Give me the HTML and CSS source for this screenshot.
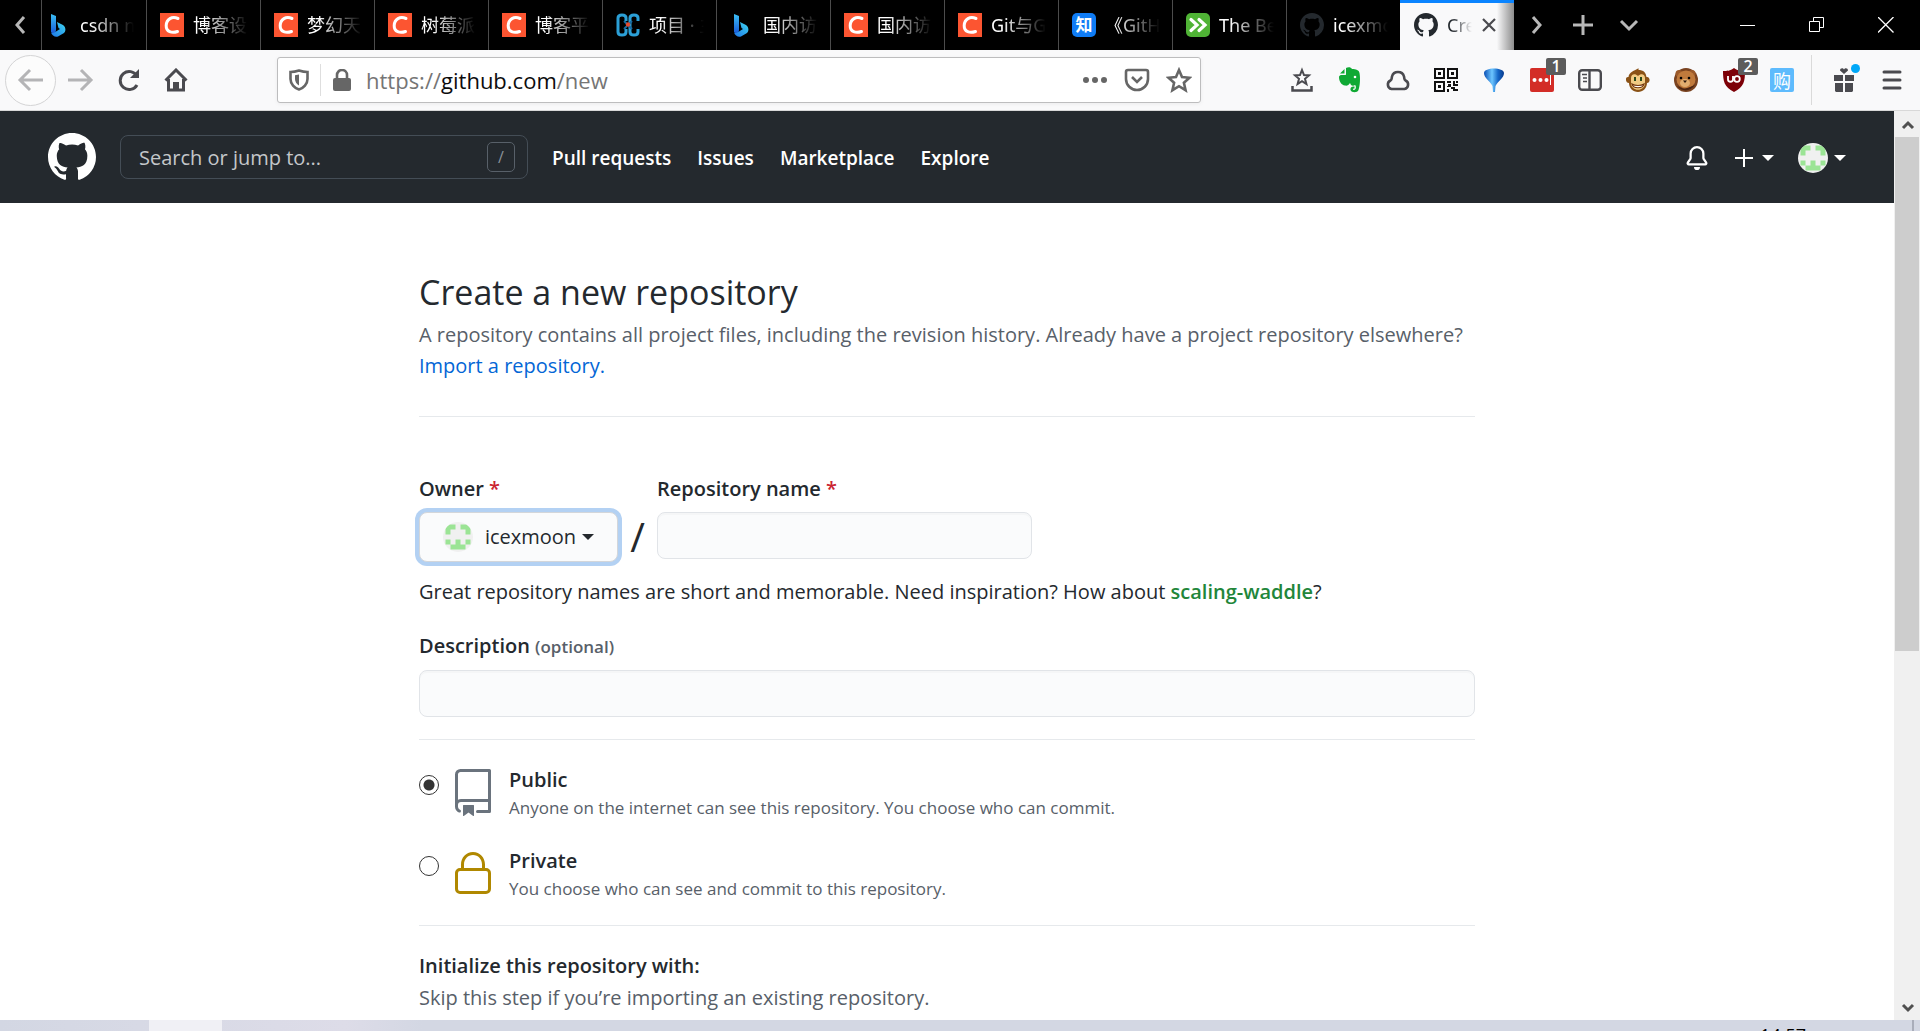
FILE: index.html
```html
<!DOCTYPE html>
<html lang="en">
<head>
<meta charset="utf-8">
<title>Create a New Repository</title>
<link rel="stylesheet" href="styles.css">
</head>
<body>
<svg class="defs" aria-hidden="true">
  <defs>
    <linearGradient id="bing-a" x1="0" y1="0" x2="0" y2="1"><stop offset="0" stop-color="#3bc0f5"/><stop offset="1" stop-color="#1551d6"/></linearGradient>
    <linearGradient id="bing-b" x1="0" y1="1" x2="1" y2="0"><stop offset="0" stop-color="#1d74e8"/><stop offset="1" stop-color="#3fd8f0"/></linearGradient>
    <linearGradient id="pin" x1="0" y1="0" x2="1" y2="0"><stop offset="0" stop-color="#0a4fb4"/><stop offset=".4" stop-color="#6cc6ff"/><stop offset=".7" stop-color="#1668c8"/><stop offset="1" stop-color="#083a8c"/></linearGradient>
  </defs>
  <symbol id="bing" viewBox="0 0 24 24"><path fill="url(#bing-a)" d="M4 1l5 2v14l-1 5-4-3z"/><path fill="url(#bing-b)" d="M10 9l6 3c3 2 3 6 1 8l-6 3.500c-3 1-6-1-7-4 2 1 4 0 5-1l4-2.500-1.500-1z"/></symbol>
  <symbol id="csdn" viewBox="0 0 24 24"><path fill="#fc5531" d="M0 0h24v24H0z"/><path fill="none" stroke="#fff" stroke-width="3" stroke-linecap="round" d="M18 5.500C12 3 6.500 6 6.200 12.500 6 19 12 20.500 17.500 18.500"/></symbol>
  <symbol id="links" viewBox="0 0 24 24"><path fill="none" stroke="#2b9fd6" stroke-width="3" d="M10 8V5c0-4-8-4-8 0v14c0 4 8 4 8 0v-3M22 8V5c0-4-8-4-8 0v14c0 4 8 4 8 0v-3"/><path stroke="#176ba2" stroke-width="2" d="M8 8l3 3m5 5l-3-3m3-5l-3 3m-5 5l3-3"/><circle cx="12" cy="11.500" r="2.200" fill="#e2492f"/></symbol>
  <symbol id="octocat" viewBox="0 0 16 16"><path fill="currentColor" fill-rule="evenodd" d="M8 0C3.580 0 0 3.580 0 8c0 3.540 2.290 6.530 5.470 7.590.4.070.55-.17.55-.38 0-.19-.01-.82-.01-1.490-2.010.37-2.530-.49-2.690-.94-.09-.23-.48-.94-.82-1.130-.28-.15-.68-.52-.01-.53.63-.01 1.080.58 1.230.82.72 1.210 1.870.87 2.330.66.07-.52.28-.87.51-1.070-1.780-.2-3.640-.89-3.640-3.950 0-.87.31-1.590.82-2.150-.08-.2-.36-1.020.08-2.120 0 0 .67-.21 2.200.82.64-.18 1.320-.27 2-.27.68 0 1.360.09 2 .27 1.530-1.040 2.200-.82 2.200-.82.44 1.100.16 1.920.08 2.120.51.56.82 1.270.82 2.150 0 3.070-1.870 3.750-3.650 3.950.29.25.54.73.54 1.480 0 1.070-.01 1.930-.01 2.200 0 .21.15.46.55.38A8.013 8.013 0 0016 8c0-4.420-3.580-8-8-8z"/></symbol>
  <symbol id="identicon" viewBox="0 0 12 12"><path fill="#f0f0f0" d="M0 0h12v12H0z"/><path fill="#9be495" d="M1 1h4v2H3v2H1zM7 1h4v4H9V3H7zM1 7h2v2H1zM5 7h2v2h2v2H3V9h2zM9 7h2v2H9z"/></symbol>
</svg>

<header class="chrome">
  <nav class="tabstrip" aria-label="Tabs">
    <button class="scroll-left" aria-label="Scroll tabs left"><svg width="24" height="24" viewBox="0 0 24 24"><path class="line" d="M15 4l-7 8 7 8"/></svg></button>
    <button class="tab tab-first"><svg class="fav"><use href="#bing"/></svg><span>csdn n</span></button>
    <button class="tab"><svg class="fav"><use href="#csdn"/></svg><span>博客设</span></button>
    <button class="tab"><svg class="fav"><use href="#csdn"/></svg><span>梦幻天</span></button>
    <button class="tab"><svg class="fav"><use href="#csdn"/></svg><span>树莓派</span></button>
    <button class="tab"><svg class="fav"><use href="#csdn"/></svg><span>博客平</span></button>
    <button class="tab"><svg class="fav"><use href="#links"/></svg><span>项目 · 主</span></button>
    <button class="tab"><svg class="fav"><use href="#bing"/></svg><span>国内访</span></button>
    <button class="tab"><svg class="fav"><use href="#csdn"/></svg><span>国内访</span></button>
    <button class="tab"><svg class="fav"><use href="#csdn"/></svg><span>Git与G</span></button>
    <button class="tab"><b class="fav zhihu">知</b><span>《GitH</span></button>
    <button class="tab"><svg class="fav" viewBox="0 0 24 24"><rect width="24" height="24" rx="5" fill="#4fb335"/><path fill="none" stroke="#fff" stroke-width="3.200" stroke-linecap="round" d="M5 6.500l6 5.500-6 5.500M13 6.500l6 5.500-6 5.500"/></svg><span>The Be</span></button>
    <button class="tab"><svg class="fav dim"><use href="#octocat"/></svg><span>icexmo</span></button>
    <div class="tab tab-active"><svg class="fav"><use href="#octocat"/></svg><span>Cre</span><button aria-label="Close tab"><svg width="16" height="16" viewBox="0 0 16 16"><path d="M2 2l12 12M14 2L2 14" stroke="#4a4a4f" stroke-width="2.200"/></svg></button></div>
    <button class="strip-btn" aria-label="Scroll tabs right"><svg width="24" height="24" viewBox="0 0 24 24"><path class="line" d="M8 4l7 8-7 8"/></svg></button>
    <button class="strip-btn" aria-label="New tab"><svg width="24" height="24" viewBox="0 0 24 24"><path class="line" d="M12 2v20M2 12h20"/></svg></button>
    <button class="strip-btn" aria-label="List all tabs"><svg width="24" height="24" viewBox="0 0 24 24"><path class="line" d="M4 8l8 8 8-8"/></svg></button>
    <div class="window-buttons">
      <button aria-label="Minimize"><svg width="16" height="16"><path d="M0 8.500h15" stroke="#fff"/></svg></button>
      <button aria-label="Restore"><svg width="16" height="16" fill="none" stroke="#fff"><path d="M.5 4.500h10v10H.5zM4.500 4.500v-4h10v10h-4"/></svg></button>
      <button aria-label="Close window"><svg width="16" height="16" stroke="#fff" stroke-width="1.300"><path d="M0 0l15.500 15.500M15.500 0L0 15.500"/></svg></button>
    </div>
  </nav>

  <div class="toolbar">
    <button class="back" aria-label="Back"><svg width="28" height="28" viewBox="0 0 28 28"><path d="M26 14H3M13 4L3 14l10 10"/></svg></button>
    <button class="nav-btn faded" aria-label="Forward"><svg width="28" height="28" viewBox="0 0 28 28"><path d="M2 14h23M15 4l10 10-10 10"/></svg></button>
    <button class="nav-btn" aria-label="Reload"><svg width="24" height="24" viewBox="0 0 24 24"><path d="M21 17a9 9 0 1 1 0-9"/><path d="M23 1v9h-9z" fill="#4a4a4f" stroke="none"/></svg></button>
    <button class="nav-btn" aria-label="Home"><svg width="24" height="24" viewBox="0 0 24 24"><path d="M1.500 12.500L12 2l10.500 10.500M4.500 11v11h15V11"/><path d="M9 22v-8h6v8z" fill="#4a4a4f" stroke="none"/></svg></button>
    <div class="urlbar">
      <svg class="shield" width="20" height="22" viewBox="0 0 20 22"><path d="M10 1.500C7 2.500 4 3 1.500 3v7c0 5 4 9 8.500 10.500C14.500 19 18.500 15 18.500 10V3C16 3 13 2.500 10 1.500z"/><path d="M10 5.500v11C7.500 15 6 12.500 6 10V6.200z" fill="#666" stroke="none"/></svg>
      <span class="divider"></span>
      <svg class="lock" width="20" height="22" viewBox="0 0 20 22"><path d="M5 10V6a5 5 0 0 1 10 0v4" fill="none" stroke="#666" stroke-width="3"/><rect x="1" y="9" width="18" height="13" rx="2" fill="#666"/></svg>
      <div class="url">https://<b>github.com</b>/new</div>
      <button aria-label="Page actions"><svg width="26" height="8"><g fill="#666"><circle cx="4" cy="4" r="3"/><circle cx="13" cy="4" r="3"/><circle cx="22" cy="4" r="3"/></g></svg></button>
      <button aria-label="Save to Pocket"><svg width="26" height="24" viewBox="0 0 26 24"><path d="M2 4a2 2 0 0 1 2-2h18a2 2 0 0 1 2 2v7a11 11 0 0 1-22 0z"/><path d="M8 9l5 5 5-5"/></svg></button>
      <button aria-label="Bookmark this page"><svg width="26" height="26" viewBox="0 0 26 26"><path d="M13 3l3 7 7.500.7-5.600 5 1.700 7.500L13 19.200l-6.600 4 1.700-7.500-5.600-5L10 10z"/></svg></button>
    </div>
    <div class="extensions">
      <button aria-label="Show bookmarks"><svg width="24" height="26" viewBox="0 0 24 26" fill="none" stroke="#4a4a4f" stroke-width="2.500"><path d="M12 3l2 5 5 .4-4 3.400 1.400 5.200L12 14.200 7.600 17 9 11.800 5 8.400 10 8z" stroke-width="2"/><path d="M2.500 19v4.500h19V19"/></svg></button>
      <button aria-label="Evernote"><svg width="24" height="26" viewBox="0 0 24 26"><path fill="#10a934" d="M8 1c2-1 5-1 6 1 4 0 7 1 7.500 4 1 5 .5 13-1 17-1 3-7 3-8 0-.5-2 1-4 4-3.500v2c-2-.5-2 1.500-.5 1.500 2 0 2.500-4 1-5-1 1-3 1-4 0l-1-2c-1 2-3 3-5 2.500C3 18 1 14 1 10c0-1 1-2 2-2h4c1 0 1-.5 1-1zM6.500 2v4.500H2z"/><circle cx="17" cy="10" r="1.300" fill="#fff"/></svg></button>
      <button aria-label="Cloud sync"><svg width="26" height="24" viewBox="0 0 26 24" fill="none" stroke="#4a4a4f" stroke-width="2.600"><path d="M6.500 21a4.500 4.500 0 0 1-1-8.500c1.500-1 1-2 1.500-4C8.500 2.500 17.500 2.500 19 8.500c.5 2 0 3 1.500 4a4.500 4.500 0 0 1-1 8.500z"/></svg></button>
      <button aria-label="QR code"><svg width="24" height="24" viewBox="0 0 24 24"><path fill="none" stroke="#111" stroke-width="2" d="M1 1h9v9H1zM14 1h9v9h-9zM1 14h9v9H1z"/><path fill="#111" d="M4 4h3v3H4zM17 4h3v3h-3zM4 17h3v3H4zM13 13h4v2h-4zM19 13h2v3h3v2h-5zM14 16h3v3h-4v-1h1zM17 19h4v2h3v2h-5v-2h-2zM13 21h2v3h-2zM22 13h2v2h-2z"/></svg></button>
      <button aria-label="Pin"><svg width="24" height="26" viewBox="0 0 24 26"><path fill="url(#pin)" d="M2 6c0-6 20-6 20 0 0 5-6 8-8.500 13l-.5 6h-2l-.5-6C8 14 2 11 2 6z"/></svg></button>
      <button aria-label="LastPass"><svg width="24" height="24"><rect width="24" height="24" rx="2" fill="#d32d27"/><g fill="#fff"><circle cx="4.500" cy="12" r="2"/><circle cx="10.500" cy="12" r="2"/><circle cx="16.500" cy="12" r="2"/><path d="M20 7h1v10h-1z"/></g></svg><i class="badge">1</i></button>
      <button aria-label="Sidebar"><svg width="24" height="22" viewBox="0 0 24 22" fill="none" stroke="#4a4a4f" stroke-width="2.400"><rect x="1.200" y="1.200" width="21.600" height="19.600" rx="3"/><path d="M11.500 1v20"/><path stroke-width="1.500" d="M4 5.500h5M5 9h4M5 12.500h4"/></svg></button>
      <button aria-label="Greasemonkey"><svg width="24" height="24" viewBox="0 0 24 24"><path fill="#8a5216" d="M13 0c-1 1-1 2 1 2 5 1 6 4 6.500 7C24 8 25 15 21 15c0 5-4 9-9 9s-9-4-9-9c-4 0-4-7-.5-6C3 4 8 3 13 0z"/><path fill="#f1cc84" d="M12 8c3-3 7-2 7 2v5c0 9-14 9-14 0v-5c0-4 4-5 7-2z"/><path fill="#fff" stroke="#71350e" stroke-width="1.200" d="M6 16c3 2 9 2 12 0-1 5-11 5-12 0z"/><path fill="#29491b" d="M8 9h2v4H8zM14 9h2v4h-2z"/></svg></button>
      <button aria-label="Bear"><svg width="24" height="24" viewBox="0 0 24 24"><circle cx="12" cy="12" r="12" fill="#7a4320"/><circle cx="5" cy="5.500" r="3.500" fill="#9c5a2a"/><circle cx="18" cy="5.500" r="3.500" fill="#9c5a2a"/><ellipse cx="12" cy="11.500" rx="9.500" ry="9" fill="#c07a3c"/><path d="M3 18c5 6 13 6 18-1l-5 2-6 2z" fill="#4a2412"/><ellipse cx="11" cy="15" rx="5" ry="4" fill="#e1ad70"/><circle cx="7" cy="10" r="1.300"/><circle cx="15" cy="10" r="1.300"/><path d="M9 12.500h4L11 15z" fill="#29150c"/></svg></button>
      <button aria-label="uBlock Origin"><svg width="22" height="24" viewBox="0 0 22 24"><path fill="#7d0007" d="M11 0c4 3 7 3 11 3 0 10-1 16-11 21C1 19 0 13 0 3c4 0 7 0 11-3z"/><path fill="none" stroke="#fff" stroke-width="1.800" d="M5 8v3.500c0 3 5 3 5 0V8"/><circle cx="14" cy="11" r="2.800" fill="none" stroke="#fff" stroke-width="1.800"/></svg><i class="badge">2</i></button>
      <button aria-label="Shopping"><b class="shop">购</b></button>
      <span class="rule"></span>
      <button class="gift" aria-label="What's new"><svg width="24" height="24" viewBox="0 0 24 24"><path fill="#4a4a4f" d="M2 7h9v6H2zM13 7h9v6h-9zM3 15h8v9H4l-1-1zM13 15h8v8l-1 1h-7zM12 6L8 2.500C8 0 11-.5 12 1.500 13-.5 16 0 16 2.500z"/></svg><i class="dot"></i></button>
      <button aria-label="Menu"><svg width="20" height="20"><path stroke="#4a4a4f" stroke-width="3" stroke-linecap="round" d="M2 2h16M2 10h16M2 18h16"/></svg></button>
    </div>
  </div>
</header>

<div class="viewport">
  <div class="page">
    <header class="site-header">
      <a class="logo" href="#" aria-label="GitHub"><svg width="48" height="48"><use href="#octocat"/></svg></a>
      <label class="search"><input type="text" aria-label="Search" placeholder="Search or jump to..."><kbd>/</kbd></label>
      <nav><a href="#">Pull requests</a><a href="#">Issues</a><a href="#">Marketplace</a><a href="#">Explore</a></nav>
      <div class="user-tools">
        <a href="#" aria-label="Notifications"><svg width="24" height="24" viewBox="0 0 16 16" fill="#fff"><path d="M8 16a2 2 0 001.985-1.750c.017-.137-.097-.25-.235-.25h-3.500c-.138 0-.252.113-.235.25A2 2 0 008 16z"/><path fill-rule="evenodd" d="M8 1.500A3.500 3.500 0 004.500 5v2.947c0 .346-.102.683-.294.97l-1.703 2.556a.018.018 0 00-.003.010l.001.006c0 .002.002.004.004.006a.017.017 0 00.006.004l.007.001h10.964l.007-.001a.016.016 0 00.006-.004.016.016 0 00.004-.006l.001-.007a.017.017 0 00-.003-.010l-1.703-2.554a1.750 1.750 0 01-.294-.97V5A3.500 3.500 0 008 1.500zM3 5a5 5 0 0110 0v2.947c0 .050.015.098.042.139l1.703 2.555A1.518 1.518 0 0113.482 13H2.518a1.518 1.518 0 01-1.263-2.360l1.703-2.554A.25.25 0 003 7.947V5z"/></svg></a>
        <button aria-label="Create new"><svg width="18" height="18"><path stroke="#fff" stroke-width="2" d="M9 0v18M0 9h18"/></svg><i class="caret"></i></button>
        <button class="account" aria-label="Account"><svg class="avatar" width="30" height="30"><use href="#identicon"/></svg><i class="caret"></i></button>
      </div>
    </header>

    <main>
      <h1>Create a new repository</h1>
      <p class="lead">A repository contains all project files, including the revision history. Already have a project repository elsewhere? <a href="#">Import a repository.</a></p>
      <hr class="wide">
      <form>
        <div class="names">
          <div class="field">
            <label for="owner">Owner <em>*</em></label>
            <button type="button" id="owner" class="owner"><svg class="avatar" width="30" height="30"><use href="#identicon"/></svg><span>icexmoon</span><i class="caret"></i></button>
          </div>
          <span class="slash">/</span>
          <div class="field">
            <label for="name">Repository name <em>*</em></label>
            <input type="text" id="name" class="box name">
          </div>
        </div>
        <p class="hint">Great repository names are short and memorable. Need inspiration? How about <strong>scaling-waddle</strong>?</p>
        <div class="field">
          <label for="description">Description <small>(optional)</small></label>
          <input type="text" id="description" class="box">
        </div>
        <hr>
        <div class="option">
          <input type="radio" name="visibility" id="public" checked>
          <svg width="48" height="48" viewBox="0 0 24 24" fill="#6a737d"><path fill-rule="evenodd" d="M3 2.750A2.750 2.750 0 015.750 0h14.500a.75.75 0 01.75.75v20.500a.75.75 0 01-.75.75h-6a.75.75 0 010-1.500h5.250v-4H6A1.500 1.500 0 004.500 18v.75c0 .716.430 1.334 1.050 1.605a.75.75 0 01-.6 1.374A3.250 3.250 0 013 18.750v-16zM19.500 1.500V15H6c-.546 0-1.059.146-1.500.401V2.750c0-.69.56-1.250 1.250-1.250H19.500z"/><path d="M7 18.250a.25.25 0 01.25-.25h5a.25.25 0 01.25.25v5.010a.25.25 0 01-.397.201l-2.206-1.604a.25.25 0 00-.294 0L7.397 23.460a.25.25 0 01-.397-.2v-5.010z"/></svg>
          <label for="public">Public<span>Anyone on the internet can see this repository. You choose who can commit.</span></label>
        </div>
        <div class="option">
          <input type="radio" name="visibility" id="private">
          <svg width="48" height="48" viewBox="0 0 24 24" fill="#b08800"><path fill-rule="evenodd" d="M6 9V7.250C6 3.845 8.503 1 12 1s6 2.845 6 6.250V9h.5a2.500 2.500 0 012.500 2.500v8a2.500 2.500 0 01-2.500 2.500h-13A2.500 2.500 0 013 19.500v-8A2.500 2.500 0 015.500 9H6zm1.500-1.750C7.500 4.580 9.422 2.500 12 2.500c2.578 0 4.500 2.080 4.500 4.750V9h-9V7.250zm-3 4.250a1 1 0 011-1h13a1 1 0 011 1v8a1 1 0 01-1 1h-13a1 1 0 01-1-1v-8z"/></svg>
          <label for="private">Private<span>You choose who can see and commit to this repository.</span></label>
        </div>
        <hr>
        <h2>Initialize this repository with:</h2>
        <p class="skip">Skip this step if you’re importing an existing repository.</p>
      </form>
    </main>
  </div>
  <div class="scrollbar" aria-hidden="true">
    <svg width="25" height="26"><path d="M8 17l5-5 5 5" fill="none" stroke="#505050" stroke-width="3"/></svg>
    <div class="track"><div class="thumb"></div></div>
    <svg width="25" height="26"><path d="M8 11l5 5 5-5" fill="none" stroke="#505050" stroke-width="3"/></svg>
  </div>
</div>
<footer class="taskbar"><span class="running"></span><time>14:57</time><span class="show-desktop"></span></footer>
</body>
</html>
```
FILE: styles.css
```css
* { box-sizing: border-box; }

body {
  margin: 0;
  height: 100vh;
  display: flex;
  flex-direction: column;
  overflow: hidden;
  font: 20px/32px "Open Sans", "Noto Sans", "Noto Sans CJK SC", sans-serif;
  color: #24292e;
  background: #fff;
}

svg { display: block; flex: none; }
.defs { position: absolute; width: 0; height: 0; }

button {
  display: flex;
  align-items: center;
  justify-content: center;
  flex: none;
  padding: 0;
  border: 0;
  background: none;
  color: inherit;
  font: inherit;
}

a { color: #0366d6; text-decoration: none; }
h1, h2, p { margin: 0; }

/* Tab strip */
.chrome { flex: none; }
.tabstrip { display: flex; height: 50px; background: #000; }
.line { fill: none; stroke: #b8b8b8; stroke-width: 3; }
.scroll-left { width: 41px; }

.tab {
  width: 114px;
  padding: 0 12px 0 13px;
  gap: 9px;
  justify-content: flex-start;
  border-left: 1px solid #4c4c4c;
  color: #fff;
  font-family: "Noto Sans", "Noto Sans CJK SC", sans-serif;
  font-size: 18px;
}
.tab span {
  flex: 1;
  overflow: hidden;
  white-space: nowrap;
  text-align: left;
  line-height: 30px;
  mask-image: linear-gradient(to right, #000 20%, transparent);
}
.tab-first { width: 105px; padding-left: 5px; }
.fav { width: 24px; height: 24px; flex: none; }
.dim { color: #24292e; }
.zhihu {
  border-radius: 5px;
  background: #0f7cf5;
  font-size: 17px;
  line-height: 24px;
  text-align: center;
}
.tab-active {
  display: flex;
  align-items: center;
  flex: none;
  border-left: 0;
  border-top: 3px solid #0a84ff;
  padding: 0 17px 3px 14px;
  color: #24292e;
  background: linear-gradient(to right, #f9f9fa 85%, #8c8c8c);
}
.tab-active button { width: 16px; }

.strip-btn { width: 46px; }
.window-buttons { display: flex; margin-left: auto; }
.window-buttons button { width: 69px; }

/* Toolbar */
.toolbar {
  display: flex;
  align-items: center;
  height: 61px;
  background: #f9f9fa;
  border-bottom: 1px solid #d8d8d8;
}
.back {
  width: 51px;
  height: 51px;
  margin-left: 5px;
  border: 1px solid #d4d4d5;
  border-radius: 50%;
  background: #fcfcfc;
}
.back path, .nav-btn path { fill: none; stroke: #4a4a4f; stroke-width: 3; }
.nav-btn path[fill] { fill: #4a4a4f; stroke: none; }
.back path, .faded path { stroke: #b4b4b6; }
.nav-btn { width: 48px; height: 48px; }

.urlbar {
  display: flex;
  align-items: center;
  flex: 1;
  height: 46px;
  margin: 0 77px;
  padding: 0 0 0 11px;
  border: 1px solid #bdbdbe;
  border-radius: 3px;
  background: #fff;
  box-shadow: 0 1px 4px rgba(0, 0, 0, .06);
}
.urlbar path { fill: none; stroke: #666; stroke-width: 2.6; }
.urlbar path[fill="#666"] { fill: #666; stroke: none; }
.urlbar button { width: 42px; height: 42px; }
.divider { width: 1px; height: 32px; margin: 0 11px; background: #dedede; }
.lock { margin-right: 14px; }
.url { flex: 1; font-size: 22px; color: #757575; }
.url b { font-weight: 400; color: #0c0c0d; }

.extensions { display: flex; align-items: center; margin-right: 4px; }
.extensions button { width: 48px; height: 48px; position: relative; }
.badge {
  position: absolute;
  top: 2px;
  right: 0;
  width: 20px;
  height: 17px;
  border-radius: 2px;
  background: #5c5c5c;
  color: #fff;
  font: 600 16px/17px "Open Sans", sans-serif;
  text-align: center;
}
.shop {
  width: 24px;
  height: 24px;
  border-radius: 2px;
  background: #5ebbfd;
  color: #fff;
  font: 400 18px/24px "Noto Sans CJK SC", sans-serif;
}
.rule { width: 1px; height: 50px; margin-left: 5px; background: #dadada; }
.extensions .gift { margin-left: 8px; }
.dot {
  position: absolute;
  top: 8px;
  right: 8px;
  width: 9px;
  height: 9px;
  border-radius: 50%;
  background: #00a8f8;
}

/* Page area */
.viewport { flex: 1; display: flex; min-height: 0; }
.page { flex: 1; min-width: 0; overflow: hidden; }

.site-header {
  display: flex;
  align-items: center;
  height: 92px;
  padding: 0 48px;
  background: #24292e;
}
.logo { color: #fff; margin-right: 24px; }
.search {
  display: flex;
  align-items: center;
  width: 408px;
  height: 44px;
  padding: 0 12px 0 18px;
  border: 1px solid #444d56;
  border-radius: 8px;
}
.search input {
  flex: 1;
  min-width: 0;
  padding: 2px 0 0;
  border: 0;
  outline: 0;
  background: none;
  color: #fff;
  font: inherit;
}
.search input::placeholder { color: #c4c7ca; opacity: 1; }
.search kbd {
  width: 28px;
  height: 30px;
  border: 1px solid #586069;
  border-radius: 5px;
  color: #8a9198;
  font: 16px/28px "Open Sans", sans-serif;
  text-align: center;
}
.site-header nav { display: flex; gap: 26px; margin-left: 24px; padding-top: 2px; }
.site-header nav a { color: #fff; font-size: 19px; font-weight: 600; }
.user-tools { display: flex; align-items: center; margin-left: auto; gap: 24px; padding-top: 2px; }
.user-tools button { gap: 9px; }
.user-tools .account { gap: 6px; }
.user-tools a { margin-right: 2px; }
.avatar { border-radius: 50%; }
.caret {
  border: 6px solid transparent;
  border-top-color: currentColor;
  border-bottom: 0;
  color: #fff;
}

/* Form */
main { max-width: 1056px; margin: 0 auto; padding-top: 66px; }
h1 { font-size: 34px; line-height: 46px; font-weight: 400; margin-bottom: 4px; }
h2 { margin-top: 24px; font-size: 20px; font-weight: 600; }
.lead, .skip { color: #586069; }
.lead { line-height: 31px; }

hr { height: 1px; margin: 22px 0; border: 0; background: #e6e9ec; }
hr.wide { margin: 35px 0 56px; }

.field { display: flex; flex-direction: column; gap: 7px; }
.field label { font-weight: 600; }
.field em { font-style: normal; color: #cb2431; }
.field small { font-size: 17px; color: #586069; }
.names { display: flex; align-items: flex-start; }
.owner {
  width: 199px;
  height: 50px;
  gap: 6px;
  border: 1px solid #d3d6da;
  border-radius: 8px;
  background: #fafbfc;
  box-shadow: 0 0 0 4px #b3d1f3;
}
.owner span { margin-left: 6px; }
.owner .caret { color: #24292e; }
.slash { width: 39px; padding-top: 48px; font-size: 40px; text-align: center; }
.box {
  height: 47px;
  padding: 0 16px;
  border: 1px solid #e1e4e8;
  border-radius: 8px;
  background: #fafbfc;
  box-shadow: inset 0 2px 0 rgba(225, 228, 232, .2);
  font: inherit;
}
.name { width: 375px; }
.hint { margin: 14px 0 22px; }
.hint strong { font-weight: 600; color: #22863a; }

.option { display: flex; align-items: flex-start; margin: 26px 0 23px; }
.option input {
  appearance: none;
  flex: none;
  width: 20px;
  height: 20px;
  margin: 9px 10px 0 0;
  border: 1px solid #333;
  border-radius: 50%;
  background: #fff;
}
.option input:checked { background: radial-gradient(circle, #333 5px, #fff 6px); }
.option svg { margin: 3px 12px 0 0; }
.option label { font-weight: 600; line-height: 28px; }
.option label span {
  display: block;
  font-size: 17px;
  line-height: 27px;
  font-weight: 400;
  color: #586069;
}

/* Scrollbar */
.scrollbar { display: flex; flex-direction: column; width: 26px; padding-left: 1px; background: #f0f0f0; }
.track { flex: 1; }
.thumb { height: 60%; margin-right: 1px; background: #cdcdcd; }

/* Taskbar */
.taskbar {
  flex: none;
  display: flex;
  height: 11px;
  overflow: hidden;
  background: linear-gradient(to right, #d3d7e3, #dddce8 18%, #d3d7e3 22%, #d3d7e3);
}
.running { width: 73px; margin-left: 149px; background: #f0f0f5; }
.taskbar time {
  margin: 5px 0 0 auto;
  color: #000;
  font: 18px/20px "Open Sans", sans-serif;
}
.show-desktop { width: 8px; margin-left: 106px; border-left: 2px solid #a9adba; }
```
